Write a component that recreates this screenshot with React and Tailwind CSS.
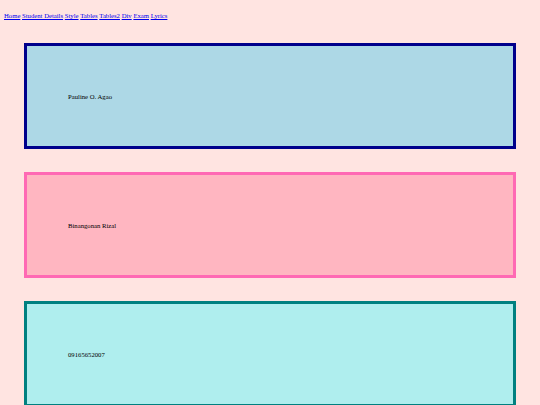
import React from 'react';

const links = ['Home', 'Student Details', 'Style', 'Tables', 'Tables2', 'Div', 'Exam', 'Lyrics'];

const boxes = [
  { text: 'Pauline O. Agao', cls: 'bg-[#add8e6] border-[#00008b]' },
  { text: 'Binangonan Rizal', cls: 'bg-[#ffb6c1] border-[#ff69b4]' },
  { text: '09165652007', cls: 'bg-[#afeeee] border-[#008080]' },
];

const App = () => {
  return (
    <div className="min-h-[405px] bg-[#ffe4e1] px-1 pt-3 font-['Liberation_Serif',serif] text-[6.7px] text-black">
      <nav className="flex gap-[1.7px] leading-[8px]">
        {links.map((l) => (
          <a key={l} href="#" className="text-[#0000ee] underline">
            {l}
          </a>
        ))}
      </nav>

      <div className="mt-[23px] flex flex-col gap-[23px] px-5">
        {boxes.map((b) => (
          <div
            key={b.text}
            className={`flex h-[106px] items-center border-[3px] pl-[41px] pt-[2px] ${b.cls}`}
          >
            {b.text}
          </div>
        ))}
      </div>
    </div>
  );
};

export default App;
